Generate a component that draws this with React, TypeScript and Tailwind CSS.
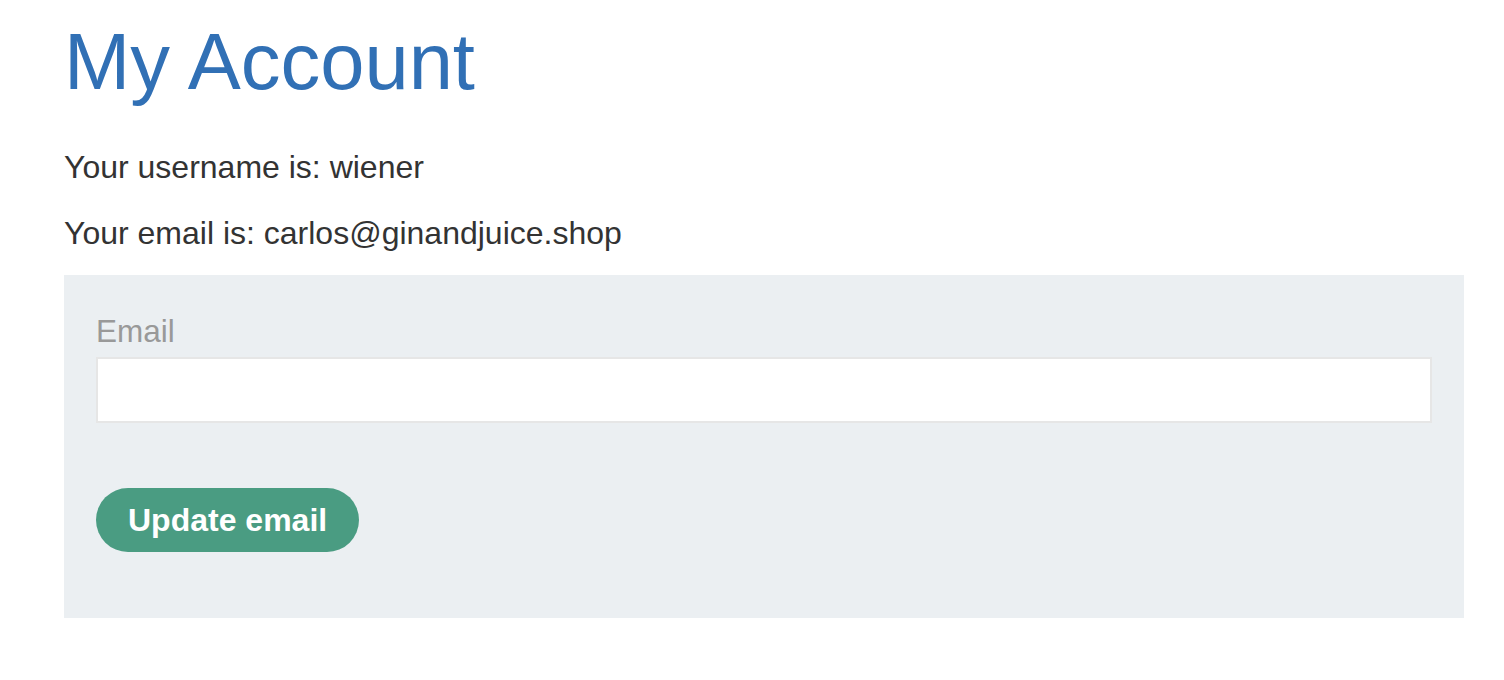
export default function App() {
  return (
    <div className="min-h-screen bg-white font-['Liberation_Sans',Arial,sans-serif] text-[#333333]">
      <div className="ml-[64px] w-[1400px] pt-[18px]">
        <h1 className="text-[79.5px] leading-[88px] text-[#3170b5]">My Account</h1>
        <p className="mt-[41px] text-[32px] leading-[40px]">Your username is: wiener</p>
        <p className="mt-[26px] text-[32px] leading-[40px]">
          Your email is: carlos@ginandjuice.shop
        </p>
        <form
          className="mt-[22px] flex flex-col items-start bg-[#ebeff2] px-[32px] pt-[36px] pb-[66px]"
          onSubmit={(e) => e.preventDefault()}
        >
          <label className="text-[31.5px] leading-[40px] text-[#999999]">Email</label>
          <input
            type="email"
            name="email"
            className="mt-[6px] h-[66px] w-full border-2 border-[#e6e6e6] bg-white px-3 text-[31.5px] outline-none"
          />
          <button
            type="submit"
            className="mt-[65px] flex h-[64px] items-center rounded-full bg-[#4a9c82] px-[32px] text-[32px] font-bold text-white"
          >
            Update email
          </button>
        </form>
      </div>
    </div>
  );
}
